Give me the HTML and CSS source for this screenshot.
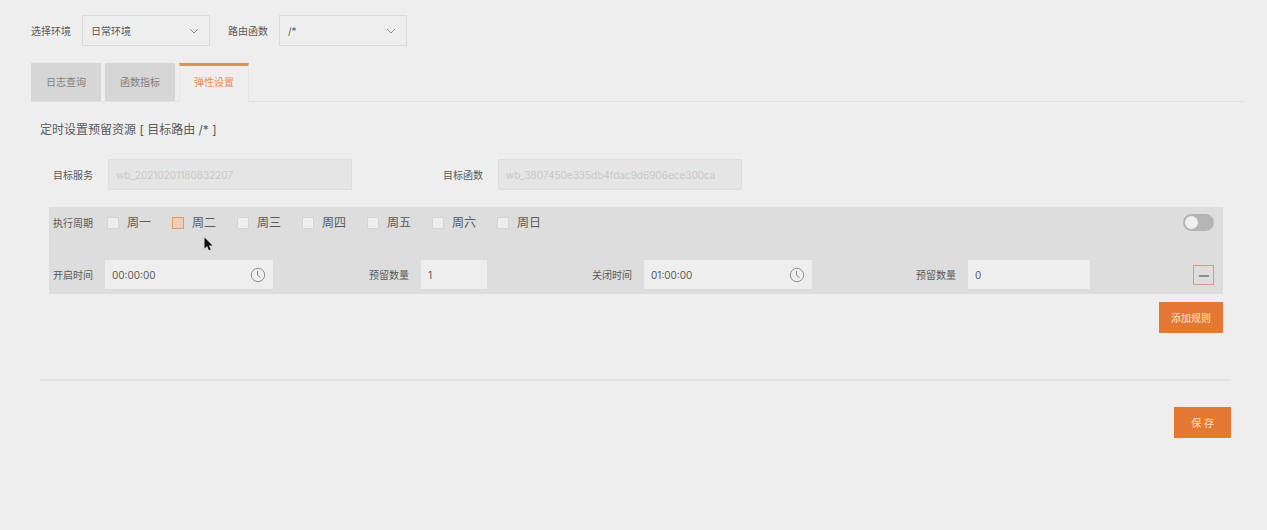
FILE: index.html
```
<!DOCTYPE html>
<html lang="zh-CN">
<head>
    <meta charset="UTF-8">
    <meta name="viewport" content="width=device-width, initial-scale=1.0">
    <title>弹性设置</title>
    <link rel="stylesheet" href="styles.css">
</head>
<body>
    <div class="filters">
        <label for="env">选择环境</label>
        <div class="select">
            <select id="env" name="env">
                <option>日常环境</option>
            </select>
            <svg class="arrow" viewBox="0 0 10 6"><path d="M1 1l4 4 4-4"/></svg>
        </div>
        <label for="route">路由函数</label>
        <div class="select">
            <select id="route" name="route">
                <option>/*</option>
            </select>
            <svg class="arrow" viewBox="0 0 10 6"><path d="M1 1l4 4 4-4"/></svg>
        </div>
    </div>

    <div class="tabs" role="tablist">
        <button type="button" class="tab" role="tab">日志查询</button>
        <button type="button" class="tab" role="tab">函数指标</button>
        <button type="button" class="tab active" role="tab" aria-selected="true">弹性设置</button>
    </div>

    <form class="panel">
        <h2>定时设置预留资源 [ 目标路由 /* ]</h2>

        <div class="targets">
            <div class="target">
                <label for="service">目标服务</label>
                <input type="text" id="service" value="wb_20210201180832207" disabled>
            </div>
            <div class="target">
                <label for="func">目标函数</label>
                <input type="text" id="func" value="wb_3807450e335db4fdac9d6906ece300ca" disabled>
            </div>
        </div>

        <div class="rule">
            <div class="cycle">
                <span class="cycle-title">执行周期</span>
                <label class="day"><input type="checkbox" name="day" value="1">周一</label>
                <label class="day hover"><input type="checkbox" name="day" value="2">周二
                    <svg class="cursor" viewBox="0 0 9 14"><path d="M0.5 0.5v11l2.6-2.4 1.8 4.2 1.8-.8-1.8-4.1h3.6z"/></svg>
                </label>
                <label class="day"><input type="checkbox" name="day" value="3">周三</label>
                <label class="day"><input type="checkbox" name="day" value="4">周四</label>
                <label class="day"><input type="checkbox" name="day" value="5">周五</label>
                <label class="day"><input type="checkbox" name="day" value="6">周六</label>
                <label class="day"><input type="checkbox" name="day" value="7">周日</label>
                <input type="checkbox" class="switch" role="switch" aria-label="启用规则">
            </div>
            <div class="times">
                <div class="field">
                    <label for="startTime">开启时间</label>
                    <div class="time">
                        <input type="text" id="startTime" value="00:00:00">
                        <svg class="clock" viewBox="0 0 16 16"><circle cx="8" cy="8" r="6.7"/><path d="M7.5 4v4.2l3 2.4"/></svg>
                    </div>
                </div>
                <div class="field">
                    <label for="startCount">预留数量</label>
                    <input type="text" class="count small" id="startCount" value="1">
                </div>
                <div class="field">
                    <label for="endTime">关闭时间</label>
                    <div class="time">
                        <input type="text" id="endTime" value="01:00:00">
                        <svg class="clock" viewBox="0 0 16 16"><circle cx="8" cy="8" r="6.7"/><path d="M7.5 4v4.2l3 2.4"/></svg>
                    </div>
                </div>
                <div class="field">
                    <label for="endCount">预留数量</label>
                    <input type="text" class="count" id="endCount" value="0">
                </div>
                <button type="button" class="remove" aria-label="删除规则">
                    <svg viewBox="0 0 10 4"><path d="M0 3h10"/></svg>
                </button>
            </div>
        </div>

        <div class="add-row">
            <button type="button" class="primary">添加规则</button>
        </div>

        <div class="footer">
            <button type="submit" class="primary">保 存</button>
        </div>
    </form>
</body>
</html>
```

FILE: styles.css
```
* {
    box-sizing: border-box;
}

body {
    margin: 0;
    padding: 15px 22px 20px 31px;
    background-color: #eeeeee;
    color: #5a5a5a;
    font-family: Inter, "Noto Sans CJK SC", sans-serif;
    font-size: 10px;
    line-height: 16px;
}

input, select, button {
    margin: 0;
    font: inherit;
    color: inherit;
    border-radius: 0;
}

svg {
    fill: none;
    stroke: #8c8c8c;
}

.filters {
    display: flex;
    align-items: center;
}

.filters label {
    margin-right: 11px;
}

.select {
    position: relative;
    width: 128px;
    margin-right: 18px;
}

.select select {
    appearance: none;
    display: block;
    width: 100%;
    height: 31px;
    padding: 0 24px 0 8px;
    background-color: transparent;
    border: 1px solid #dadada;
}

.arrow {
    position: absolute;
    right: 11px;
    top: 13px;
    width: 10px;
    height: 6px;
    pointer-events: none;
}

.tabs {
    display: flex;
    gap: 4px;
    margin-top: 17px;
    border-bottom: 1px solid #e2e2e2;
}

.tab {
    width: 70px;
    height: 38px;
    padding: 0;
    background-color: #d6d6d6;
    border: none;
    color: #808080;
    cursor: pointer;
}

.tab.active {
    margin-bottom: -1px;
    height: 39px;
    padding-bottom: 4px;
    background-color: #eeeeee;
    border: 1px solid #e4e4e4;
    border-top: 3px solid #da925f;
    border-bottom: none;
    color: #e58d58;
}

.panel {
    padding: 19px 14px 0 9px;
}

h2 {
    margin: 0;
    font-size: 12px;
    font-weight: normal;
    line-height: 18px;
}

.targets {
    display: flex;
    gap: 91px;
    padding: 20px 0 17px 13px;
}

.target, .field {
    display: flex;
    align-items: center;
}

.target {
    gap: 15px;
}

.target input {
    width: 244px;
    height: 31px;
    padding: 0 7px;
    background-color: #e5e5e5;
    border: 1px solid #dedede;
    color: #c8c8c8;
}

.rule {
    margin: 0 8px 0 9px;
    padding: 0 9px 5px 4px;
    background-color: #dddddd;
}

.cycle {
    display: flex;
    align-items: center;
    height: 31px;
}

.cycle-title {
    margin-right: 14px;
}

.day {
    position: relative;
    display: flex;
    align-items: center;
    gap: 8px;
    width: 65px;
    font-size: 12px;
}

.day input {
    appearance: none;
    width: 12px;
    height: 12px;
    background-color: #eeeeee;
    border: 1px solid #d5d5d5;
}

.day.hover input {
    background-color: #f0cdb5;
    border-color: #e39a6a;
}

.cursor {
    position: absolute;
    left: 32px;
    top: 22px;
    width: 9px;
    height: 14px;
}

.cursor path {
    fill: #111111;
    stroke: none;
}

.switch {
    appearance: none;
    display: flex;
    width: 31px;
    height: 17px;
    margin-left: auto;
    padding: 2px;
    background-color: #b4b4b4;
    border-radius: 9px;
}

.switch::before {
    content: "";
    width: 13px;
    height: 13px;
    background-color: #f0f0f0;
    border-radius: 50%;
}

.switch:checked {
    justify-content: flex-end;
    background-color: #e47833;
}

.times {
    display: grid;
    grid-template-columns: 316fr 223fr 324fr 277fr 21px;
    align-items: center;
    padding-top: 22px;
}

.field {
    gap: 12px;
}

.field input {
    height: 29px;
    padding: 0 7px;
    background-color: #eeeeee;
    border: none;
}

.time {
    position: relative;
}

.time input {
    display: block;
    width: 168px;
}

.clock {
    position: absolute;
    right: 7px;
    top: 7px;
    width: 16px;
    height: 16px;
}

.count {
    width: 122px;
}

.count.small {
    width: 66px;
}

.remove {
    display: flex;
    align-items: center;
    justify-content: center;
    width: 21px;
    height: 20px;
    padding: 0;
    background-color: transparent;
    border: 1px solid #dc9a80;
    cursor: pointer;
}

.remove svg {
    width: 10px;
    height: 4px;
    stroke-width: 2;
}

.primary {
    height: 31px;
    padding: 0 12px;
    background-color: #e47833;
    border: none;
    color: #fbe3d3;
    cursor: pointer;
}

.add-row {
    display: flex;
    justify-content: flex-end;
    padding: 8px 8px 46px;
}

.footer {
    display: flex;
    justify-content: flex-end;
    padding-top: 26px;
    border-top: 2px solid #e3e3e3;
}

.footer .primary {
    padding: 0 17px;
}
```
